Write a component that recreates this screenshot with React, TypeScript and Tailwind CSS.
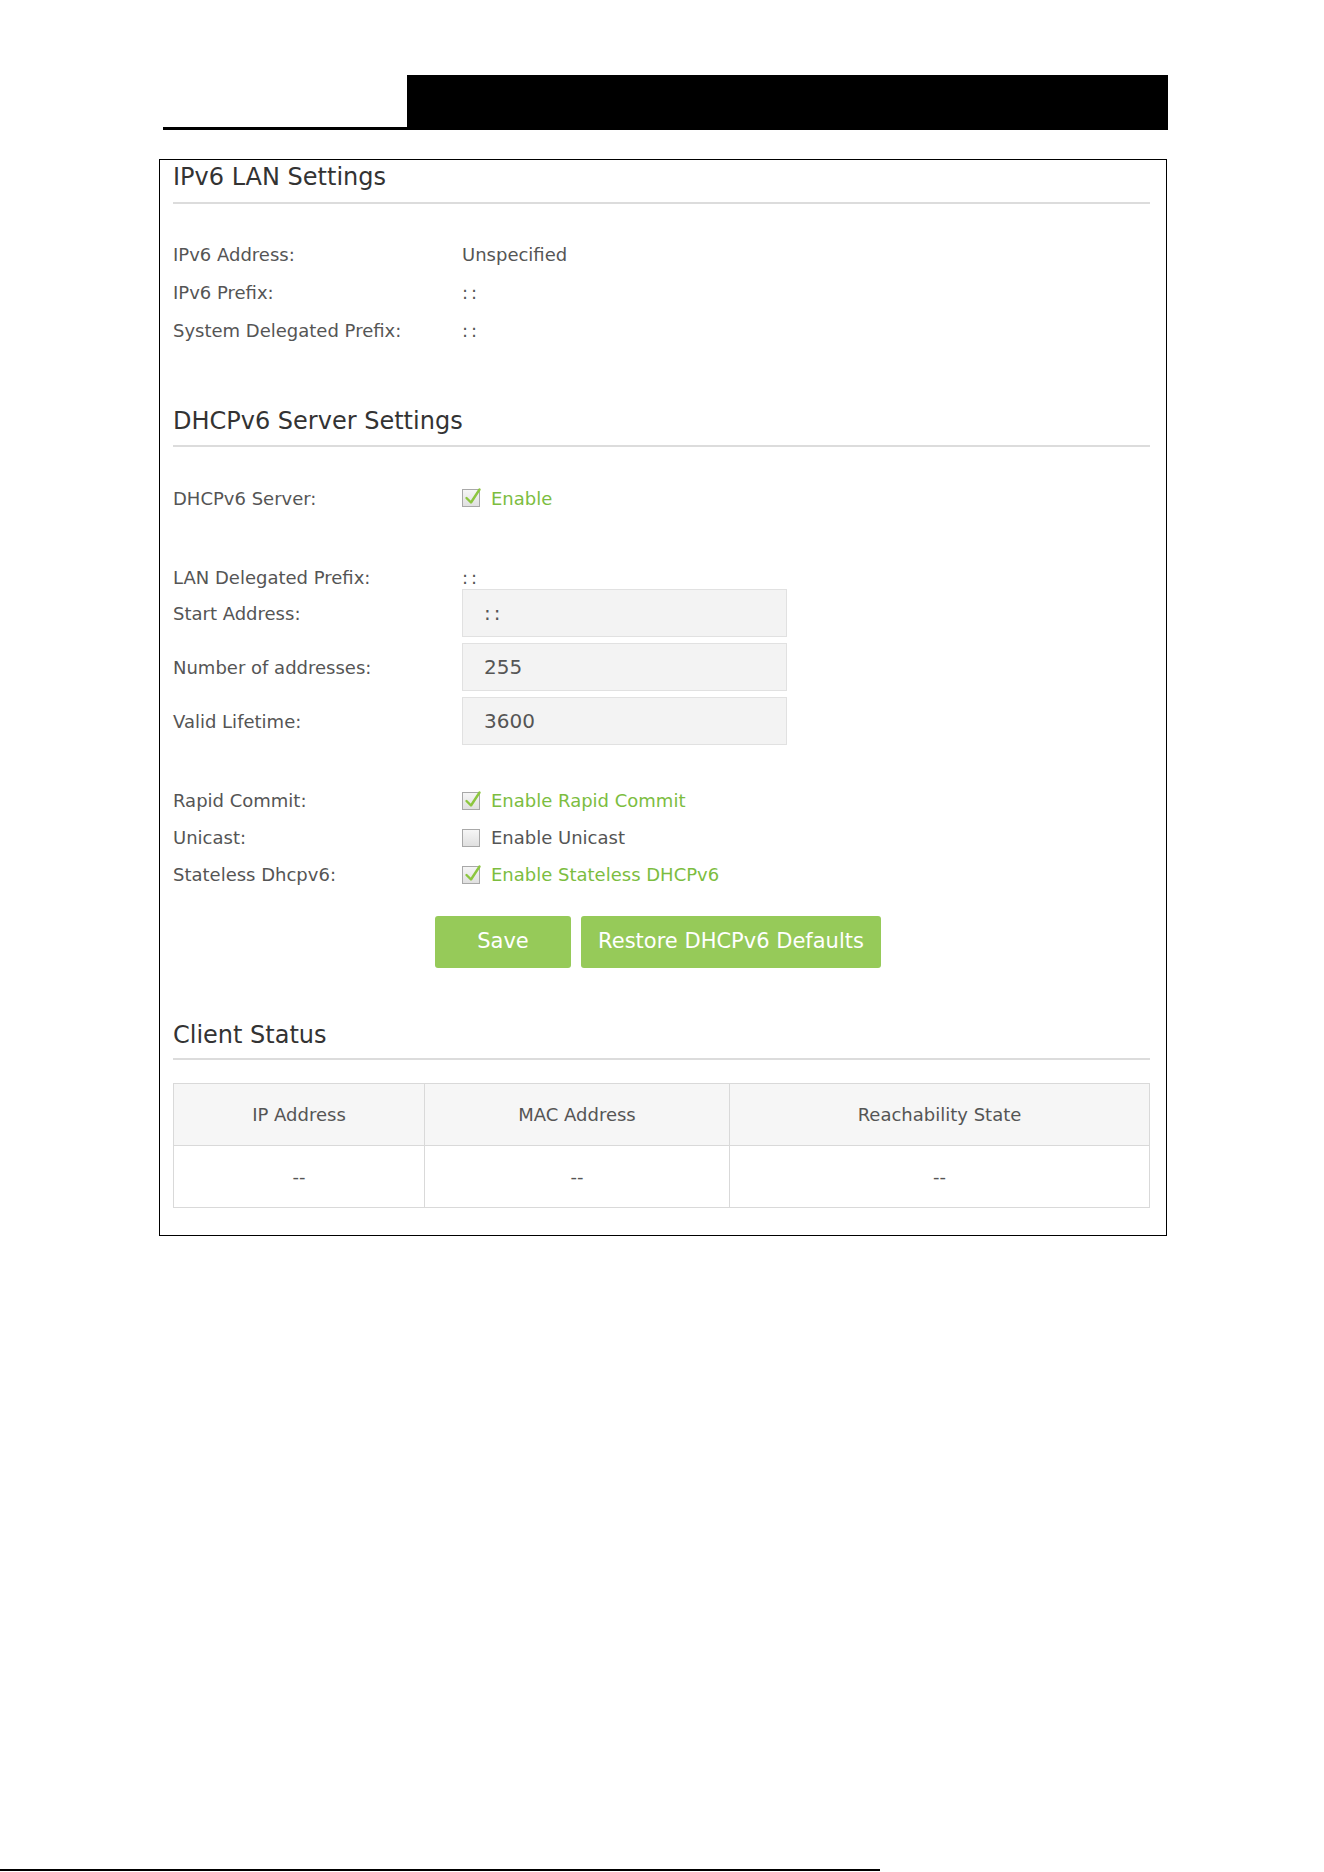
import React from "react";

const Check = ({ checked }: { checked: boolean }) => (
  <span className="relative inline-block w-[18px] h-[18px] border border-[#a8a8a8] bg-gradient-to-b from-[#f6f6f6] to-[#e0e0e0] mr-[11px] shrink-0">
    {checked && (
      <svg className="absolute left-[1px] top-[-3px]" width="18" height="19" viewBox="0 0 18 19">
        <path d="M2.5 11 L7 15.5 L15.5 2.5" fill="none" stroke="#8cc63f" strokeWidth="2.4" strokeLinecap="round" strokeLinejoin="round" />
      </svg>
    )}
  </span>
);

const SectionTitle = ({ children }: { children: React.ReactNode }) => (
  <div className="h-[28px] leading-[28px] text-[24px] text-[#333333]">{children}</div>
);

const Divider = ({ mt }: { mt: string }) => <div className={`h-[2px] bg-[#dcdcdc] ${mt}`} />;

const Colons = () => <span className="tracking-[3px]">::</span>;

const Row = ({ label, children, h = "h-[38px]" }: { label: string; children?: React.ReactNode; h?: string }) => (
  <div className={`flex items-center ${h}`}>
    <div className="w-[289px] text-[18px] text-[#555555]">{label}</div>
    <div className="flex items-center text-[18px] text-[#555555]">{children}</div>
  </div>
);

const InputRow = ({ label, value }: { label: string; value: React.ReactNode }) => (
  <div className="flex items-center h-[48px]">
    <div className="w-[289px] text-[18px] text-[#555555]">{label}</div>
    <div className="w-[325px] h-[48px] bg-[#f3f3f3] border border-[#e1e1e1] flex items-center pl-[21px] text-[20px] text-[#555555]">
      {value}
    </div>
  </div>
);

export default function App() {
  return (
    <div className="w-[1324px] h-[1872px] bg-white font-['DejaVu_Sans',sans-serif] overflow-hidden">
      <div className="pt-[75px] flex pl-[163px]">
        <div className="w-[244px] h-[55px] border-b-[3px] border-black" />
        <div className="w-[761px] h-[55px] bg-black" />
      </div>

      <div className="ml-[159px] mt-[29px] w-[1008px] h-[1077px] border border-black pl-[13px] pr-[16px] pt-[3px]">
        <SectionTitle>IPv6 LAN Settings</SectionTitle>
        <Divider mt="mt-[11px]" />
        <div className="mt-[31px]">
          <Row label="IPv6 Address:">Unspecified</Row>
          <Row label="IPv6 Prefix:"><Colons /></Row>
          <Row label="System Delegated Prefix:"><Colons /></Row>
        </div>

        <div className="mt-[58px]">
          <SectionTitle>DHCPv6 Server Settings</SectionTitle>
        </div>
        <Divider mt="mt-[10px]" />
        <div className="mt-[32px]">
          <Row label="DHCPv6 Server:">
            <Check checked />
            <span className="text-[#7cbd3f]">Enable</span>
          </Row>
        </div>
        <div className="mt-[48px]">
          <Row label="LAN Delegated Prefix:" h="h-[24px]"><Colons /></Row>
          <div className="flex flex-col gap-[6px]">
            <InputRow label="Start Address:" value={<Colons />} />
            <InputRow label="Number of addresses:" value="255" />
            <InputRow label="Valid Lifetime:" value="3600" />
          </div>
        </div>
        <div className="mt-[37px]">
          <Row label="Rapid Commit:" h="h-[37px]">
            <Check checked />
            <span className="text-[#7cbd3f]">Enable Rapid Commit</span>
          </Row>
          <Row label="Unicast:" h="h-[37px]">
            <Check checked={false} />
            <span>Enable Unicast</span>
          </Row>
          <Row label="Stateless Dhcpv6:" h="h-[37px]">
            <Check checked />
            <span className="text-[#7cbd3f]">Enable Stateless DHCPv6</span>
          </Row>
        </div>
        <div className="mt-[23px] flex gap-[10px] pl-[262px]">
          <button className="w-[136px] h-[52px] rounded-[3px] bg-[#96ca59] text-white text-[21px]">Save</button>
          <button className="w-[300px] h-[52px] rounded-[3px] bg-[#96ca59] text-white text-[21px]">Restore DHCPv6 Defaults</button>
        </div>

        <div className="mt-[53px]">
          <SectionTitle>Client Status</SectionTitle>
        </div>
        <Divider mt="mt-[9px]" />
        <div className="mt-[23px] border border-[#d9d9d9] text-[18px] text-[#555555]">
          <div className="flex h-[62px] bg-[#f6f6f6] border-b border-[#d9d9d9]">
            <div className="w-[251px] flex items-center justify-center border-r border-[#d9d9d9]">IP Address</div>
            <div className="w-[305px] flex items-center justify-center border-r border-[#d9d9d9]">MAC Address</div>
            <div className="flex-1 flex items-center justify-center">Reachability State</div>
          </div>
          <div className="flex h-[61px]">
            <div className="w-[251px] flex items-center justify-center border-r border-[#d9d9d9]">--</div>
            <div className="w-[305px] flex items-center justify-center border-r border-[#d9d9d9]">--</div>
            <div className="flex-1 flex items-center justify-center">--</div>
          </div>
        </div>
      </div>

      <div className="mt-[633px] w-[880px] h-[2px] bg-black" />
    </div>
  );
}
